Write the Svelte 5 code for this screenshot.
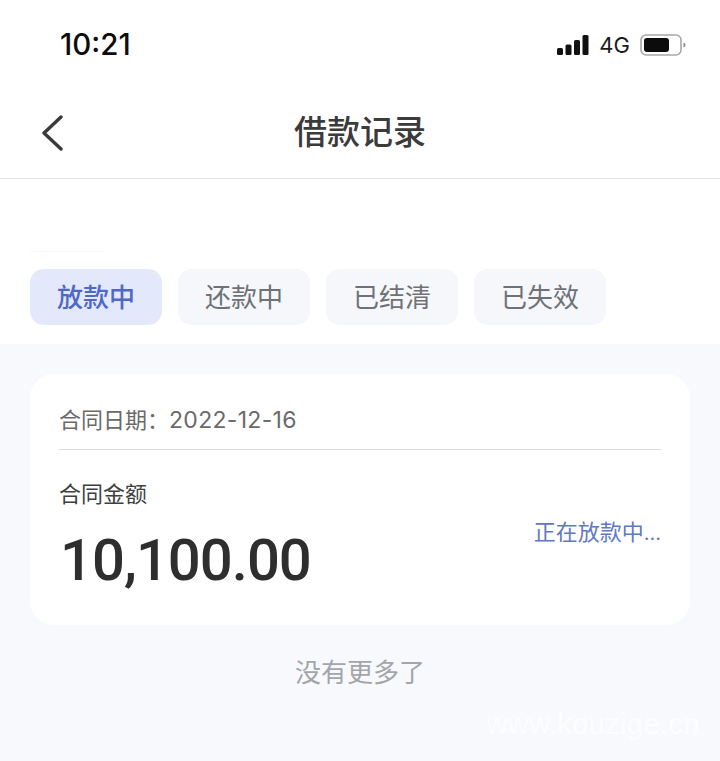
<script>
  const tabs = ['放款中', '还款中', '已结清', '已失效'];
</script>

<div class="page">
  <header class="status">
    <span class="time">10:21</span>
    <div class="sys">
      <svg class="signal" width="32" height="20" viewBox="0 0 32 20" aria-hidden="true">
        <rect x="0" y="13" width="6" height="7" rx="1.5" />
        <rect x="8.5" y="9.5" width="6" height="10.5" rx="1.5" />
        <rect x="17" y="5" width="6" height="15" rx="1.5" />
        <rect x="25.5" y="0" width="6" height="20" rx="1.5" />
      </svg>
      <span class="net">4G</span>
      <svg class="batt" width="46" height="22" viewBox="0 0 46 22" aria-hidden="true">
        <rect x="1" y="1" width="40" height="20" rx="5" fill="none" stroke="#a8a8a8" stroke-width="1.6" />
        <rect x="4" y="4" width="25" height="14" rx="3" fill="#0c0c0c" />
        <path d="M43.5 8.5c1.4.5 2 1.4 2 2.5s-.6 2-2 2.5z" fill="#8a8a8a" />
      </svg>
    </div>
  </header>

  <nav class="bar">
    <svg class="back" width="22" height="36" viewBox="0 0 22 36" aria-hidden="true">
      <path d="M20 2 L3 18 L20 34" fill="none" stroke="#3a3a3a" stroke-width="3.4" stroke-linecap="round" stroke-linejoin="round" />
    </svg>
    <h1>借款记录</h1>
  </nav>

  <section class="tabs">
    <span class="ghost"></span>
    {#each tabs as t, i}
      <div class="tab" class:active={i === 0}>{t}</div>
    {/each}
  </section>

  <main class="list">
    <article class="card">
      <div class="date">合同日期：<span class="num">2022-12-16</span></div>
      <div class="body">
        <div>
          <div class="label">合同金额</div>
          <div class="amount">10,100.00</div>
        </div>
        <div class="state">正在放款中<span class="dots">...</span></div>
      </div>
    </article>
    <p class="end">没有更多了</p>
    <div class="mark">www.kouzige.cn</div>
  </main>
</div>

<style>
  :global(body) {
    margin: 0;
    background: #fff;
  }
  .page {
    width: 720px;
    height: 761px;
    overflow: hidden;
    display: flex;
    flex-direction: column;
    font-family: "Inter", "Noto Sans CJK SC", sans-serif;
    background: #fff;
  }
  .status {
    height: 90px;
    box-sizing: border-box;
    padding: 0 34px 0 60px;
    display: flex;
    align-items: center;
    justify-content: space-between;
  }
  .time {
    font-size: 29.5px;
    font-weight: 500;
    color: #0d0d0d;
    line-height: 1;
  }
  .sys {
    display: flex;
    align-items: center;
    gap: 10px;
    color: #1a1a1a;
  }
  .signal rect {
    fill: #111;
  }
  .net {
    font-size: 22px;
    line-height: 1;
    font-weight: 400;
    color: #1c1c1c;
  }
  .bar {
    position: relative;
    height: 89px;
    box-sizing: border-box;
    border-bottom: 1px solid #e3e3e3;
    display: flex;
    align-items: center;
    justify-content: center;
    padding-bottom: 3px;
  }
  .back {
    position: absolute;
    left: 41px;
    top: 25px;
  }
  h1 {
    margin: 0;
    font-size: 33px;
    font-weight: 500;
    color: #3b3b3b;
    line-height: 1;
  }
  .tabs {
    position: relative;
    height: 165px;
    box-sizing: border-box;
    padding: 90px 0 0 30px;
    display: flex;
    gap: 16px;
    align-items: flex-start;
  }
  .ghost {
    position: absolute;
    left: 30px;
    top: 72px;
    width: 75px;
    height: 1px;
    background: #f6f7f9;
  }
  .tab {
    width: 132px;
    height: 56px;
    border-radius: 14px;
    background: #f5f7fb;
    color: #6f7176;
    font-size: 26px;
    line-height: 1;
    padding-top: 2px;
    box-sizing: border-box;
    display: flex;
    align-items: center;
    justify-content: center;
  }
  .tab.active {
    background: #e3e9fb;
    color: #4f68c8;
    font-weight: 500;
  }
  .list {
    position: relative;
    flex: 1;
    background: #f7f9fd;
    padding: 30px 30px 0;
  }
  .card {
    height: 251px;
    box-sizing: border-box;
    background: #fff;
    border-radius: 24px;
    padding: 0 29px;
  }
  .date {
    height: 76px;
    box-sizing: border-box;
    border-bottom: 1px solid #dcdcdc;
    padding-top: 31px;
    font-size: 22px;
    line-height: 30px;
    color: #6a6a6a;
  }
  .num {
    font-size: 23px;
    letter-spacing: 0.3px;
  }
  .body {
    display: flex;
    justify-content: space-between;
    align-items: flex-start;
  }
  .label {
    margin-top: 30px;
    font-size: 22px;
    line-height: 28px;
    color: #3f3f3f;
  }
  .amount {
    margin: 19px 0 0 1px;
    font-family: "Roboto", sans-serif;
    font-size: 58px;
    line-height: 66px;
    font-weight: 500;
    color: #2e2e2e;
    letter-spacing: -1px;
  }
  .state {
    margin-top: 67px;
    font-size: 22px;
    line-height: 30px;
    color: #5f78c4;
  }
  .dots {
    font-size: 20px;
  }
  .end {
    margin: 31px 0 0;
    text-align: center;
    font-size: 26px;
    line-height: 34px;
    color: #a3a5a8;
  }
  .mark {
    position: absolute;
    right: 20px;
    top: 363px;
    font-family: "Liberation Sans", sans-serif;
    font-size: 29px;
    line-height: 34px;
    color: rgba(255, 255, 255, 0.75);
    letter-spacing: 0.4px;
  }
</style>
